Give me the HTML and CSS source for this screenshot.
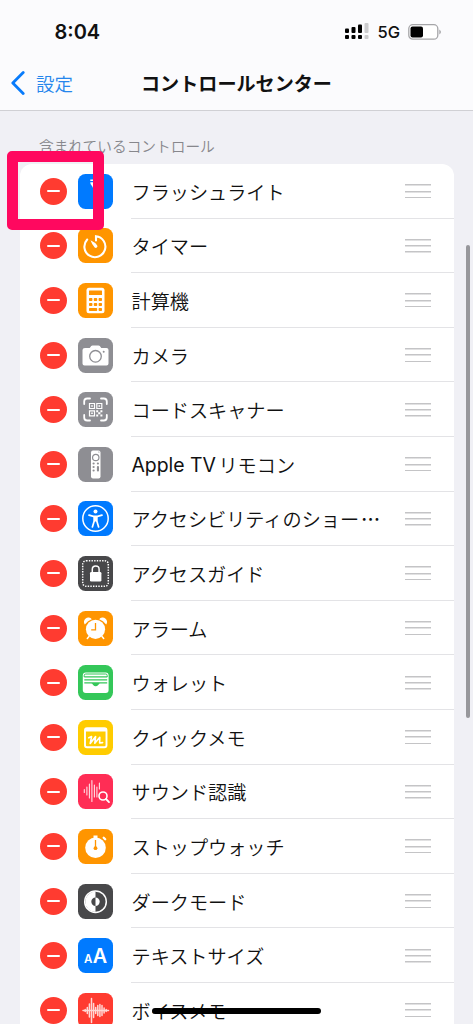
FILE: index.html
```html
<!DOCTYPE html>
<html lang="ja">
<head>
<meta charset="utf-8">
<title>コントロールセンター</title>
<link rel="stylesheet" href="styles.css">
</head>
<body>
<div class="screen">
  <header class="header">
    <div class="status">
      <span class="clock">8:04</span>
      <div class="status-right">
        <svg class="signal" viewBox="0 0 24 17" width="24" height="17">
          <g fill="#000"><rect x="0" y="5.5" width="4" height="4.5" rx="1"/><rect x="6.5" y="4" width="4" height="6" rx="1"/><rect x="13" y="1.5" width="4" height="8.5" rx="1"/><rect x="0" y="12" width="4" height="4" rx="1"/><rect x="6.5" y="12" width="4" height="4" rx="1"/><rect x="13" y="12" width="4" height="4" rx="1"/></g>
          <g fill="#ccccce"><rect x="19.5" y="0" width="4" height="10" rx="1"/><rect x="19.5" y="12" width="4" height="4" rx="1"/></g>
        </svg>
        <span class="network">5G</span>
        <svg class="battery" viewBox="0 0 34 16" width="34" height="16">
          <rect x=".8" y=".7" width="29" height="14.5" rx="4" fill="#fff" stroke="#a5a5a8" stroke-width="1.3"/>
          <rect x="2.5" y="2.5" width="12.5" height="11" rx="2" fill="#000"/>
          <path d="M31.3 5.5Q34.6 8 31.3 10.5Z" fill="#a5a5a8"/>
        </svg>
      </div>
    </div>
    <nav class="nav">
      <a class="back"><svg viewBox="0 0 14 24" width="14" height="24"><path d="M12.2 1.5 1.8 12l10.4 10.5" fill="none" stroke="#087bfb" stroke-width="2.8" stroke-linecap="round" stroke-linejoin="round"/></svg><span>設定</span></a>
      <h1 class="title">コントロールセンター</h1>
    </nav>
  </header>
  <main class="content">
    <h2 class="section-title">含まれているコントロール</h2>
    <ul class="card">
      <li class="row"><i class="remove"></i>
        <svg class="icon blue" viewBox="0 0 35 35"><g fill="#fff"><path d="M12.300 5.500h10.700v1.600H12.300zM12.300 8.300h10.700c0 3-2.700 3.500-2.700 6V29q0 1.500-1.500 1.500h-2.300q-1.500 0-1.500-1.500V14.300C15 12 12.300 11.300 12.300 8.300z"/></g></svg>
        <span class="label">フラッシュライト</span><i class="grip"></i></li>
      <li class="row"><i class="remove"></i>
        <svg class="icon orange" viewBox="0 0 35 35"><path d="M18 12.500V8.200A10.500 10.500 0 1 1 9.200 11.500" fill="none" stroke="#fff" stroke-width="2.100" stroke-linecap="round"/><path d="M12.500 12.300q4.500 2 6.700 5.100a1.700 1.700 0 0 1-2.500 2.200q-2.500-2.600-4.200-7.300z" fill="#fff"/></svg>
        <span class="label">タイマー</span><i class="grip"></i></li>
      <li class="row"><i class="remove"></i>
        <svg class="icon orange" viewBox="0 0 35 35"><rect x="8.500" y="4.800" width="18" height="25.400" rx="2.500" fill="#fff"/><g fill="#ff9500"><rect x="11" y="7.500" width="13" height="4.500" rx=".5"/><rect x="11" y="15" width="3.400" height="3" rx=".8"/><rect x="15.800" y="15" width="3.400" height="3" rx=".8"/><rect x="20.600" y="15" width="3.400" height="3" rx=".8"/><rect x="11" y="20" width="3.400" height="3" rx=".8"/><rect x="15.800" y="20" width="3.400" height="3" rx=".8"/><rect x="20.600" y="20" width="3.400" height="3" rx=".8"/><rect x="11" y="25" width="8.200" height="3" rx=".8"/><rect x="20.600" y="25" width="3.400" height="3" rx=".8"/></g></svg>
        <span class="label">計算機</span><i class="grip"></i></li>
      <li class="row"><i class="remove"></i>
        <svg class="icon gray" viewBox="0 0 35 35"><path d="M7 10h4.700l1.500-2q.5-.6 1.300-.6h6q.8 0 1.300.6l1.500 2H28.500q2 0 2 2V25.500q0 2-2 2H6.500q-2 0-2-2V12q0-2 2.500-2z" fill="#fff"/><circle cx="17.500" cy="18.300" r="5.800" fill="#fff" stroke="#8e8e93" stroke-width="1.300"/><circle cx="25.700" cy="13.700" r="1" fill="#8e8e93"/></svg>
        <span class="label">カメラ</span><i class="grip"></i></li>
      <li class="row"><i class="remove"></i>
        <svg class="icon gray" viewBox="0 0 35 35"><g fill="none" stroke="#fff"><path d="M6.200 12V9.500q0-3 3-3H12M23 6.500h2.800q3 0 3 3V12M28.800 23v2.500q0 3-3 3H23M12 28.500H9.200q-3 0-3-3V23" stroke-width="1.800" stroke-linecap="round"/><path d="M11.500 11.500h5v5h-5zM18.800 11.500h5v5h-5zM11.500 18.800h5v5h-5z" stroke-width="1.200"/></g><path d="M13.200 13.200h1.600v1.600h-1.600zM20.500 13.200h1.600v1.600h-1.600zM13.200 20.500h1.600v1.600h-1.600zM18.200 18.200h2v2h-2zM22.400 18.200h2v2h-2zM20.200 20.300h2.200v2h-2.200zM18.200 22.400h2v2h-2zM22.400 22.400h2v2h-2z" fill="#fff"/></svg>
        <span class="label">コードスキャナー</span><i class="grip"></i></li>
      <li class="row"><i class="remove"></i>
        <svg class="icon gray" viewBox="0 0 35 35"><rect x="13" y="3.500" width="9.500" height="28" rx="2" fill="#fff"/><circle cx="17.750" cy="10.500" r="3.200" fill="none" stroke="#8e8e93" stroke-width="1.200"/><g fill="#8e8e93"><circle cx="20.900" cy="5" r=".6"/><circle cx="15.600" cy="16.500" r="1.100"/><circle cx="19.900" cy="16.500" r="1.100"/><circle cx="15.600" cy="20" r="1.100"/><circle cx="15.600" cy="23.500" r="1.100"/><rect x="18.900" y="19" width="2.100" height="5.600" rx="1"/></g></svg>
        <span class="label"><span class="latin">Apple TV</span>リモコン</span><i class="grip"></i></li>
      <li class="row"><i class="remove"></i>
        <svg class="icon blue" viewBox="0 0 35 35"><circle cx="17.500" cy="17.500" r="12.700" fill="none" stroke="#fff" stroke-width="1.500"/><circle cx="17.500" cy="10.600" r="2" fill="#fff"/><path d="m11 14.200 4.500 1.100h4l4.500-1.100M16.200 15.500v4.500l-1.800 6M18.800 15.500v4.500l1.800 6" fill="none" stroke="#fff" stroke-width="1.700" stroke-linecap="round" stroke-linejoin="round"/><path d="M15.800 15h3.400v5.500h-3.400z" fill="#fff"/></svg>
        <span class="label">アクセシビリティのショー<span class="ellipsis">…</span></span><i class="grip"></i></li>
      <li class="row"><i class="remove"></i>
        <svg class="icon dark" viewBox="0 0 35 35"><rect x="4.700" y="4.700" width="25.600" height="25.600" rx="3.500" fill="none" stroke="#fff" stroke-width="1.500" stroke-dasharray="1.400 1.250"/><rect x="12" y="16" width="11.400" height="9.500" rx="1.300" fill="#fff"/><path d="M14.300 16.500v-3.200q0-3.300 3.400-3.300t3.400 3.300v3.200" fill="none" stroke="#fff" stroke-width="1.500"/></svg>
        <span class="label">アクセスガイド</span><i class="grip"></i></li>
      <li class="row"><i class="remove"></i>
        <svg class="icon orange" viewBox="0 0 35 35"><circle cx="17.500" cy="18.300" r="9.600" fill="#fff"/><path d="M6.800 13.500a4 4 0 1 1 7-5.200q-4 1.200-7 5.200zM28.200 13.500a4 4 0 1 0-7-5.200q4 1.200 7 5.200z" fill="#fff"/><path d="m11 25.500-1.700 2M24 25.500l1.700 2" stroke="#fff" stroke-width="1.500" stroke-linecap="round"/><path d="M17.500 12v6.800h-4.300" fill="none" stroke="#ff9500" stroke-width="1.300"/></svg>
        <span class="label">アラーム</span><i class="grip"></i></li>
      <li class="row"><i class="remove"></i>
        <svg class="icon green" viewBox="0 0 35 35"><rect x="4.800" y="7.500" width="25.800" height="20.500" rx="3" fill="#fff"/><g fill="none" stroke="#34c759"><path d="M6.200 12V10.500q0-1.500 1.500-1.500h20q1.500 0 1.500 1.500V12" stroke-width="1"/><path d="M6.300 11.900h22.900M6.300 14.900h22.900" stroke-width="1.400"/></g><path d="M6.300 17.300h22.900v1.300h-6.900q-1.300 0-2 1.300-2.700 2.800-5.200 0-.7-1.300-2-1.300H6.300z" fill="#34c759"/></svg>
        <span class="label">ウォレット</span><i class="grip"></i></li>
      <li class="row"><i class="remove"></i>
        <svg class="icon yellow" viewBox="0 0 35 35"><rect x="7" y="8.200" width="21.500" height="19" rx="2" fill="none" stroke="#fff" stroke-width="1.900"/><path d="M7 8h21.500v3.500H7z" fill="#fff"/><path d="M10.800 17.800 13.600 16.600 12.200 23.500 17.600 16.600 16.800 23.300 21.800 17.300 21.600 23 24.600 22.600" fill="none" stroke="#fff" stroke-width="1.600" stroke-linecap="round" stroke-linejoin="round"/></svg>
        <span class="label">クイックメモ</span><i class="grip"></i></li>
      <li class="row"><i class="remove"></i>
        <svg class="icon pink" viewBox="0 0 35 35"><path d="M6.300 15.500v3M8.900 13v8M11.400 10v14M13.900 6.500v21M16.400 11v12M18.900 13v10M21.400 9v6" stroke="#fff" stroke-opacity=".85" stroke-width="1.100" stroke-linecap="round"/><circle cx="25" cy="22" r="4" fill="none" stroke="#fff" stroke-width="1.600"/><path d="m28 25 3 3.100" stroke="#fff" stroke-width="1.800" stroke-linecap="round"/></svg>
        <span class="label">サウンド認識</span><i class="grip"></i></li>
      <li class="row"><i class="remove"></i>
        <svg class="icon orange" viewBox="0 0 35 35"><circle cx="17.500" cy="18.800" r="10.300" fill="#fff"/><path d="M15.500 6.500h4v3h-4z" fill="#fff"/><path d="m25.700 8.700 1.500 1.500" stroke="#fff" stroke-width="2.300" stroke-linecap="round"/><path d="M17.500 11v8" stroke="#ff9500" stroke-width="1.300"/><circle cx="17.500" cy="19.200" r="1.900" fill="#ff9500"/></svg>
        <span class="label">ストップウォッチ</span><i class="grip"></i></li>
      <li class="row"><i class="remove"></i>
        <svg class="icon dark" viewBox="0 0 35 35"><circle cx="17.500" cy="17.700" r="10.800" fill="none" stroke="#fff" stroke-width="1.500"/><path d="M17.500 7.500a10.200 10.200 0 0 0 0 20.400v-6a4.200 4.200 0 0 1 0-8.400z" fill="#fff"/><path d="M17.500 13.500a4.200 4.200 0 0 1 0 8.400z" fill="#fff"/></svg>
        <span class="label">ダークモード</span><i class="grip"></i></li>
      <li class="row"><i class="remove"></i>
        <svg class="icon blue" viewBox="0 0 35 35"><g class="letters"><text x="6" y="24.500" font-size="11.500">A</text><text x="14.800" y="24.500" font-size="19.800">A</text></g></svg>
        <span class="label">テキストサイズ</span><i class="grip"></i></li>
      <li class="row"><i class="remove"></i>
        <svg class="icon red" viewBox="0 0 35 35"><path d="M5 17.500h25.500M7.200 16.500v2M9.300 14.500v6M11.400 11v13M13.500 5.500v24M15.600 10.500v14M17.700 14.500v6M19.800 12.500v10M21.900 11.500v12M24 12.500v10M26.100 15v5M28.200 16.500v2" stroke="#fff" stroke-opacity=".8" stroke-width="1.500" stroke-linecap="round"/></svg>
        <span class="label">ボイスメモ</span><i class="grip"></i></li>
    </ul>
  </main>
  <div class="highlight"></div>
  <div class="scrollbar"></div>
  <div class="home-indicator"></div>
</div>
</body>
</html>
```
FILE: styles.css
```css
* { box-sizing: border-box; }
body {
  margin: 0;
  font-family: Inter, "Noto Sans CJK JP", sans-serif;
  color: #111;
}
.screen {
  position: relative;
  width: 473px;
  height: 1024px;
  overflow: hidden;
  background: #f0f0f5;
}
.header {
  height: 111px;
  background: #fbfbfd;
  border-bottom: 1px solid #d0d0d4;
}
.status {
  display: flex;
  justify-content: space-between;
  align-items: center;
  height: 56px;
  padding: 7px 31px 0 54.500px;
}
.clock { font-size: 20px; font-weight: 600; line-height: 24px; }
.status-right { display: flex; align-items: center; }
.network { margin: 1px 8px 0 8px; font-size: 16.500px; font-weight: 450; line-height: 20px; }
.nav {
  display: grid;
  grid-template-columns: 141px 1fr;
  align-items: center;
  height: 54px;
}
.back {
  display: flex;
  align-items: center;
  gap: 11px;
  padding-left: 11px;
  color: #2586ec;
  font-size: 18.500px;
  font-weight: 350;
  line-height: 28px;
}
.back span, .title { padding-top: 2px; }
.title { margin: 0; font-size: 19.100px; font-weight: 700; line-height: 28px; }
.content { padding: 26px 19.500px 0; }
.section-title {
  margin: 0;
  padding-left: 19.500px;
  height: 27px;
  color: #87878c;
  font-size: 14.700px;
  font-weight: 350;
  line-height: 21px;
}
.card {
  margin: 0;
  padding: 0;
  list-style: none;
  background: #fff;
  border-radius: 12px 12px 0 0;
}
.row {
  display: flex;
  align-items: center;
  height: 54.600px;
  padding-left: 20.500px;
}
.remove {
  display: flex;
  align-items: center;
  justify-content: center;
  width: 27px;
  height: 27px;
  border-radius: 50%;
  background: #ff3b30;
}
.remove::before {
  content: "";
  width: 13px;
  height: 2px;
  border-radius: 1px;
  background: #fff;
}
.icon {
  flex: none;
  width: 35px;
  height: 35px;
  margin: 0 18.700px 0 10.800px;
  border-radius: 7.500px;
}
.blue { background: #007aff; }
.orange { background: #ff9500; }
.gray { background: #8e8e93; }
.dark { background: #48484a; }
.green { background: #34c759; }
.yellow { background: #ffcc00; }
.pink { background: #ff2d55; }
.red { background: #ff3b30; }
.letters { fill: #fff; font-family: Inter, sans-serif; font-weight: 600; }
/* The separator runs under the grip to the card's edge. */
.label {
  display: flex;
  align-items: center;
  flex: 1;
  align-self: stretch;
  margin-right: -48.500px;
  padding-top: 2px;
  border-bottom: 1px solid #e3e3e6;
  font-size: 19.150px;
  font-weight: 350;
  white-space: nowrap;
}
.row:last-child .label { border-bottom: 0; }
.latin { margin-right: 2.500px; font-size: 19.400px; font-weight: 400; }
.ellipsis { margin-left: 2px; font-family: "Noto Sans CJK JP", sans-serif; font-weight: 500; }
.grip {
  flex: none;
  width: 26px;
  height: 14px;
  margin-right: 22.500px;
  background:
    linear-gradient(#c4c4c6, #c4c4c6) top / 100% 1.500px no-repeat,
    linear-gradient(#c4c4c6, #c4c4c6) center / 100% 1.500px no-repeat,
    linear-gradient(#c4c4c6, #c4c4c6) bottom / 100% 1.500px no-repeat;
}
.highlight {
  position: absolute;
  left: 7px;
  top: 151px;
  width: 97px;
  height: 79px;
  border: 11px solid #ff085f;
  border-radius: 5px;
}
.scrollbar {
  position: absolute;
  left: 466px;
  top: 245px;
  width: 3.500px;
  height: 473px;
  border-radius: 2px;
  background: #97979b;
}
.home-indicator {
  position: absolute;
  left: 152px;
  top: 1008px;
  width: 169px;
  height: 6px;
  border-radius: 3px;
  background: #000;
}
```
